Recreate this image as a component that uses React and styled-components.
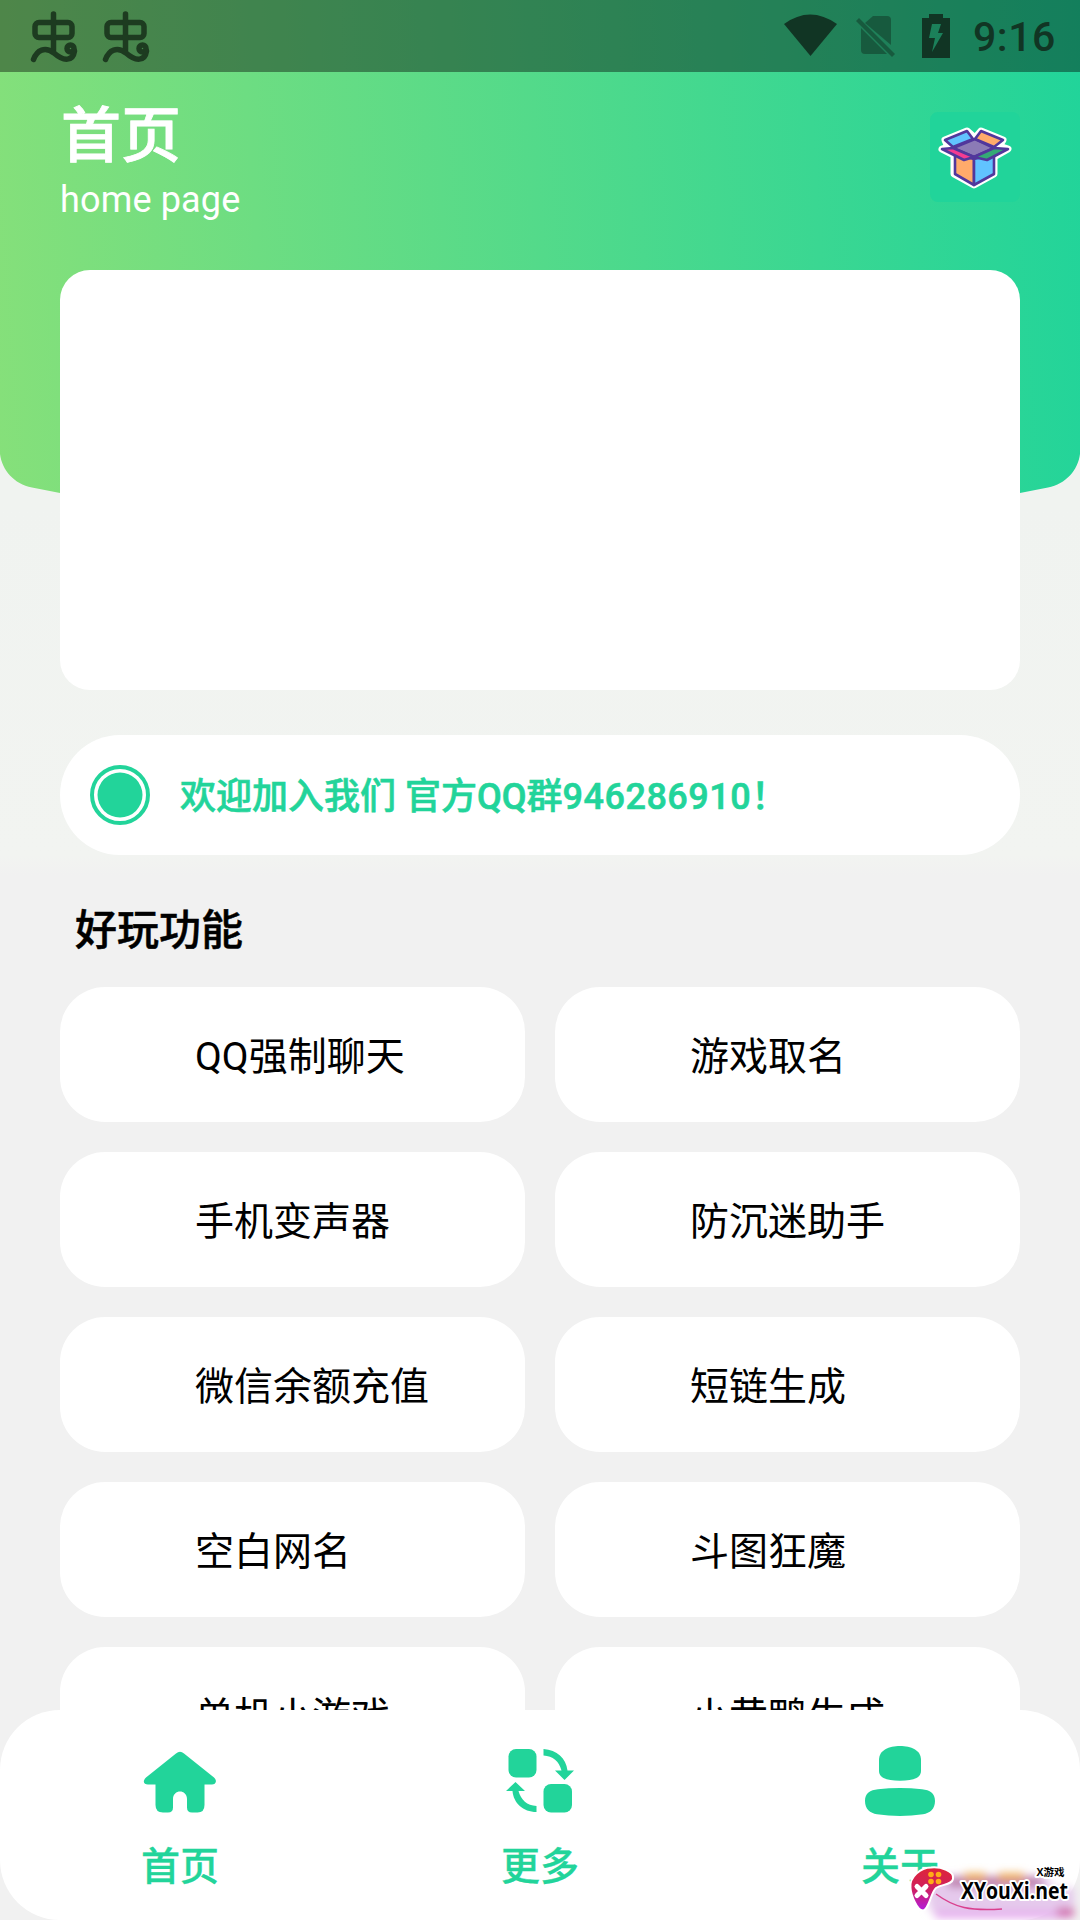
import React from 'react';
import styled, { createGlobalStyle } from 'styled-components';

const GREEN = '#22d49a';

const GlobalStyle = createGlobalStyle`
    * {
        box-sizing: border-box;
    }

    body {
        margin: 0;
        font-family: Roboto, "Noto Sans CJK SC", sans-serif;
        color: #000;
    }
`;

// Styled Components
const Screen = styled.div`
    position: relative;
    display: flex;
    flex-direction: column;
    width: 1080px;
    height: 1920px;
    overflow: hidden;
    background: linear-gradient(#f0f3f0 500px, #f2f4f1 855px, #f1f1f1 875px);
`;

const HeaderBackground = styled.div`
    position: absolute;
    top: 0;
    left: 0;
    width: 100%;
    height: 540px;
    background: linear-gradient(86deg, #86e07a, #21d49a);
    clip-path: path('M0 0H1080V454C1078 470 1066 484 1048 487.500L1020 493Q540 580 60 493L32 487.500C14 484 2 470 0 454Z');
`;

const StatusBar = styled.div`
    position: relative;
    display: flex;
    flex: none;
    align-items: center;
    justify-content: space-between;
    height: 72px;
    padding: 0 24px 0 30px;
    background: rgba(0, 0, 0, 0.4);
`;

const StatusGroup = styled.div`
    display: flex;
    align-items: center;
`;

const BugIcon = styled.svg`
    width: 48px;
    height: 54px;
    margin-right: 24px;
    fill: none;
    stroke: #1d3b20;
    stroke-width: 5.5;
    stroke-linecap: round;
`;

const SystemIcons = styled.svg`
    width: 168px;
    height: 48px;
    margin-right: 21px;
    fill: #113524;
`;

const Clock = styled.span`
    padding-top: 2px;
    font-size: 41px;
    font-weight: 500;
    line-height: 48px;
    letter-spacing: 0.6px;
    color: #113524;
`;

const Content = styled.main`
    position: relative;
    display: flex;
    flex: 1;
    flex-direction: column;
    min-height: 0;
    padding: 0 60px;
    overflow: hidden;
`;

const TitleBar = styled.header`
    display: flex;
    flex: none;
    align-items: flex-start;
    justify-content: space-between;
    height: 198px;
    color: #fff;
`;

const Title = styled.h1`
    margin: 28px 0 0 1px;
    font-size: 60px;
    font-weight: 500;
    line-height: 74px;
    -webkit-text-stroke: 0.8px #fff;
`;

const Subtitle = styled.p`
    margin: 5px 0 0;
    font-size: 36px;
    line-height: 42px;
    letter-spacing: 0.15px;
`;

const LogoTile = styled.div`
    width: 90px;
    height: 90px;
    margin-top: 40px;
    border-radius: 8px;
    background: #21d49a;
`;

const Banner = styled.section`
    flex: none;
    height: 420px;
    border-radius: 30px;
    background: #fff;
`;

const Notice = styled.section`
    display: flex;
    flex: none;
    align-items: center;
    gap: 30px;
    height: 120px;
    margin-top: 45px;
    padding: 0 30px;
    border-radius: 60px;
    background: #fff;
    font-size: 36px;
    font-weight: 500;
    line-height: 48px;
    color: ${GREEN};
    -webkit-text-stroke: 0.6px ${GREEN};
`;

const NoticeText = styled.span`
    padding-top: 3px;
    white-space: pre;
`;

const Digits = styled.span`
    letter-spacing: 0.5px;
`;

const SectionTitle = styled.h2`
    flex: none;
    margin: 46px 0 26px 15px;
    font-size: 42px;
    font-weight: 500;
    line-height: 60px;
    -webkit-text-stroke: 0.5px #000;
`;

const FeatureGrid = styled.div`
    display: grid;
    grid-template-columns: 1fr 1fr;
    grid-auto-rows: 135px;
    gap: 30px;
`;

const Feature = styled.button`
    padding: 5px 0 0 135px;
    border: 0;
    border-radius: 45px;
    background: #fff;
    font: 400 39px/46px Roboto, 'Noto Sans CJK SC', sans-serif;
    text-align: left;
    color: #000;
`;

const BottomNav = styled.nav`
    position: relative;
    display: grid;
    flex: none;
    grid-template-columns: repeat(3, 1fr);
    height: 210px;
    border-radius: 60px;
    background: #fff;
`;

const NavItem = styled.a`
    display: flex;
    flex-direction: column;
    align-items: center;
    padding-top: 30px;
    font-size: 39px;
    font-weight: 500;
    line-height: 48px;
    color: ${GREEN};
    -webkit-text-stroke: 0.3px ${GREEN};
`;

const NavIcon = styled.svg`
    width: 84px;
    height: 84px;
    margin-bottom: 19px;
    fill: ${GREEN};
`;

const Watermark = styled.div`
    position: absolute;
    right: 0;
    bottom: 0;
    width: 180px;
    height: 64px;
`;

const WatermarkArt = styled.svg`
    display: block;
    width: 180px;
    height: 64px;
`;

const features = [
    'QQ强制聊天',
    '游戏取名',
    '手机变声器',
    '防沉迷助手',
    '微信余额充值',
    '短链生成',
    '空白网名',
    '斗图狂魔',
    '单机小游戏',
    '小黄鸭生成',
];

const Bug = () => (
    <BugIcon viewBox="0 0 48 54">
        <rect x="5" y="13.500" width="37" height="15" rx="4" />
        <path d="M23.500 5V41" />
        <path d="M3.500 50.500C7 41 15 37 24 44C34 53 43 52 44.500 42" />
        <circle cx="40.500" cy="39.500" r="3.500" />
    </BugIcon>
);

const StatusIcons = () => (
    <SystemIcons viewBox="785 12 168 48">
        <path d="M785 24Q811 5 838 24L811.500 56Z" />
        <g opacity="0.5">
            <path d="M874 16H888Q892 16 892 20V45L866 23Z" />
            <path d="M862 28L888 54H866Q862 54 862 50Z" />
            <path d="M857 21L860 18L896 54L893 57Z" />
        </g>
        <path
            fillRule="evenodd"
            d="M930 14H944V18H951V58H923V18H930ZM933 24H942L939 33H944L933 52L936 38H930Z"
        />
    </SystemIcons>
);

const boxOutline = 'M12 37L18 35L15 28L37 19L45 26L51 19L73 28L69 34L78 37L64 45V62L44 73L24 62V43Z';

const BoxLogo = () => (
    <svg width="90" height="90" viewBox="0 0 90 90" strokeLinejoin="round">
        <path d={boxOutline} fill="#fff" stroke="#fff" strokeWidth="7" />
        <g stroke="#51379c" strokeWidth="2.600">
            <path d="M25 42L44 47V73L25 62Z" fill="#ffab6b" />
            <path d="M44 47L64 42V62L44 73Z" fill="#61c3ff" />
            <path d="M23 36L45 27L64 36L44 45Z" fill="#8b7bb6" />
            <path d="M15 28L37 19L43 27L23 35Z" fill="#61c3ff" />
            <path d="M51 19L73 28L64 35L45 27Z" fill="#ffab6b" />
            <path d="M12 37L23 36L44 45L34 48Z" fill="#f43c91" />
            <path d="M44 45L64 36L78 37L57 48Z" fill="#35a976" />
        </g>
    </svg>
);

const HomeIcon = () => (
    <NavIcon viewBox="0 0 84 84">
        <path d="M38 13.500Q42 10 46 13.500L76 37.500C80 41.500 77 44.500 74 44.500H66.500V65Q66.500 72.500 59.500 72.500H54Q49 72.500 49 67.500V59C49 49 35 49 35 59V67.500Q35 72.500 30 72.500H25Q17.500 72.500 17.500 65V44.500H10C6 44.500 4 41.500 8 37.500Z" />
    </NavIcon>
);

const MoreIcon = () => (
    <NavIcon viewBox="0 0 84 84">
        <rect x="10.500" y="9" width="28" height="28.500" rx="7.500" />
        <rect x="45.500" y="44" width="28.500" height="28.500" rx="7.500" />
        <path d="M45.500 9C59 10 68 18 69.500 30.500H76L66.500 40L57 30.500H63.500C61 21 55 16 45.500 15.500Z" />
        <path d="M38.500 72C25 72 15.500 63 14.500 51H8L17.500 42L27 51H20.500C23 60 29 65.500 38.500 66Z" />
    </NavIcon>
);

const AboutIcon = () => (
    <NavIcon viewBox="0 0 84 84">
        <path d="M21 20C21 10 31 6 42 6S63 10 63 20V31C63 38 55 40.700 42 40.700S21 38 21 31Z" />
        <path d="M7 61C7 53 12 50 20 49.200Q42 47 64 49.200C72 50 77 53 77 61C77 69 72 73 65 74.300Q42 77.500 19 74.300C12 73 7 69 7 61Z" />
    </NavIcon>
);

const tabs = [
    { label: '首页', Icon: HomeIcon },
    { label: '更多', Icon: MoreIcon },
    { label: '关于', Icon: AboutIcon },
];

const SiteMark = () => (
    <Watermark>
        <WatermarkArt viewBox="0 0 180 64">
            <defs>
                <linearGradient id="pad" x1="0" y1="0" x2="0" y2="1">
                    <stop offset="0" stopColor="#df2537" />
                    <stop offset="0.500" stopColor="#cf205f" />
                    <stop offset="1" stopColor="#b31ce0" />
                </linearGradient>
                <filter id="haze" x="-20%" y="-60%" width="140%" height="220%">
                    <feGaussianBlur stdDeviation="4.500" />
                </filter>
            </defs>
            <g filter="url(#haze)">
                <path d="M25 20H150V32H174V56H30Z" fill="#e5c9ec" />
                <path d="M48 21H142V31H48Z" fill="#b976a8" />
                <path d="M64 17H86V25H64ZM98 17H124V25H98Z" fill="#efb060" />
                <path d="M35 56H172V62H35Z" fill="#e5a2ee" />
                <path d="M157 52H174V60H157Z" fill="#cf65a5" />
            </g>
            <path d="M36 38C55 52 70 55 102 53" fill="none" stroke="#d9408e" strokeWidth="1.500" />
            <path
                d="M11.500 32C10 21 22 11.500 32 11.500C41 10.500 56 15 54 23C53 29 43 28 37 32C32 36 30 54 24 54.500C18 54.500 12 39 11.500 32Z"
                fill="url(#pad)"
                stroke="#fff"
                strokeWidth="2"
                transform="translate(-1 0)"
            />
            <path d="M17 30.500L26 39.500M26 30.500L17 39.500" stroke="#fff" strokeWidth="5" strokeLinecap="round" />
            <g fill="#ffad17">
                <circle cx="31" cy="18.500" r="2.800" />
                <circle cx="38.500" cy="18.500" r="2.800" />
                <circle cx="31" cy="25.500" r="2.800" />
                <circle cx="38.500" cy="25.500" r="2.800" />
            </g>
            <g stroke="#fff" strokeWidth="4" strokeLinejoin="round" paintOrder="stroke">
                <text
                    x="61"
                    y="43"
                    fontFamily="Open Sans"
                    fontWeight="700"
                    fontSize="23.500"
                    textLength="107"
                    lengthAdjust="spacingAndGlyphs"
                >
                    XYouXi.net
                </text>
                <text x="136.500" y="20" fontFamily="Open Sans, Noto Sans CJK SC" fontWeight="700" fontSize="10.500">
                    X游戏
                </text>
            </g>
        </WatermarkArt>
    </Watermark>
);

const App = () => (
    <>
        <GlobalStyle />
        <Screen>
            <HeaderBackground />
            <StatusBar>
                <StatusGroup>
                    <Bug />
                    <Bug />
                </StatusGroup>
                <StatusGroup>
                    <StatusIcons />
                    <Clock>9:16</Clock>
                </StatusGroup>
            </StatusBar>
            <Content>
                <TitleBar>
                    <div>
                        <Title>首页</Title>
                        <Subtitle>home page</Subtitle>
                    </div>
                    <LogoTile>
                        <BoxLogo />
                    </LogoTile>
                </TitleBar>
                <Banner />
                <Notice>
                    <svg width="60" height="60" viewBox="0 0 60 60" fill={GREEN}>
                        <circle cx="30" cy="30" r="28" fill="none" stroke={GREEN} strokeWidth="4" />
                        <circle cx="30" cy="30" r="22.500" />
                    </svg>
                    <NoticeText>
                        欢迎加入我们 官方QQ群<Digits>946286910！</Digits>
                    </NoticeText>
                </Notice>
                <SectionTitle>好玩功能</SectionTitle>
                <FeatureGrid>
                    {features.map(name => (
                        <Feature key={name}>{name}</Feature>
                    ))}
                </FeatureGrid>
            </Content>
            <BottomNav>
                {tabs.map(({ label, Icon }) => (
                    <NavItem key={label}>
                        <Icon />
                        {label}
                    </NavItem>
                ))}
            </BottomNav>
            <SiteMark />
        </Screen>
    </>
);

export default App;
